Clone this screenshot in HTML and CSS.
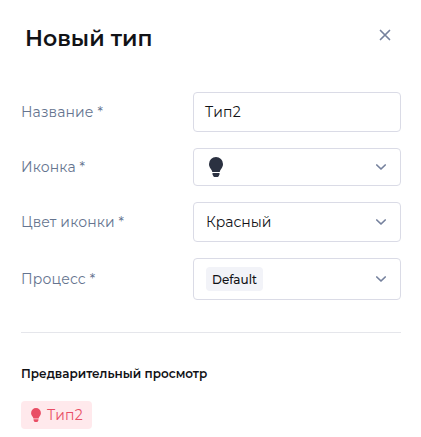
FILE: index.html
```html
<!DOCTYPE html>
<html lang="ru">
<head>
<meta charset="utf-8">
<title>Новый тип</title>
<link rel="stylesheet" href="styles.css">
</head>
<body>
<svg class="sprite" aria-hidden="true">
  <symbol id="bulb" viewBox="0 0 14 20"><path d="M7 0a7 7 0 0 1 7 7c0 2-.7 3.400-1.700 4.700-.8 1.100-1.300 2-1.600 3.300H3.300C3 13.700 2.500 12.800 1.700 11.700.7 10.400 0 9 0 7a7 7 0 0 1 7-7z"/><path d="M3.500 16h7v1.500l-.9 1.800a1.200 1.200 0 0 1-1 .7H5.400a1.200 1.200 0 0 1-1-.7l-.9-1.800z"/></symbol>
  <symbol id="chevron" viewBox="0 0 12 8"><path d="M1.800 2 6 6l4.200-4"/></symbol>
</svg>
<main class="dialog">
  <header class="header">
    <h1 class="title">Новый тип</h1>
    <button class="close" aria-label="Закрыть"><svg viewBox="0 0 12 12"><path d="M1.500 1.500l9 9M10.500 1.500l-9 9"/></svg></button>
  </header>
  <form class="form">
    <div class="row"><label class="label">Название *</label><div class="field input"><span class="value">Тип2</span></div></div>
    <div class="row"><label class="label">Иконка *</label><div class="field short"><svg class="bulb"><use href="#bulb"/></svg><svg class="chevron"><use href="#chevron"/></svg></div></div>
    <div class="row"><label class="label">Цвет иконки *</label><div class="field"><span class="value">Красный</span><svg class="chevron"><use href="#chevron"/></svg></div></div>
    <div class="row"><label class="label">Процесс *</label><div class="field tall"><span class="tag">Default</span><svg class="chevron"><use href="#chevron"/></svg></div></div>
  </form>
  <section class="preview">
    <h2 class="subtitle">Предварительный просмотр</h2>
    <div class="chip"><svg class="chip-icon"><use href="#bulb"/></svg><span>Тип2</span></div>
  </section>
</main>
</body>
</html>
```
FILE: styles.css
```css
* { box-sizing: border-box; }
body { margin: 0; background: #fff; color: #111216; font-family: Montserrat, Inter, sans-serif; }
.sprite { position: absolute; width: 0; height: 0; }
.dialog { width: 401px; padding-left: 21px; }
.header { display: flex; justify-content: space-between; height: 92px; padding: 25px 10px 0 4px; }
.title { margin: 0; font-size: 22px; line-height: 28px; font-weight: 600; white-space: nowrap; }
.close { width: 12px; height: 12px; margin-top: 4px; padding: 0; border: 0; background: none; }
.close svg { display: block; width: 12px; height: 12px; fill: none; stroke: #75819d; stroke-width: 1.700; stroke-linecap: round; }
.form { display: flex; flex-direction: column; gap: 16px; padding-bottom: 32px; border-bottom: 1px solid #e5e6eb; }
.row { display: grid; grid-template-columns: 172px 208px; align-items: center; }
.label { color: #65748f; font-size: 14px; line-height: 20px; letter-spacing: 0.13px; white-space: nowrap; }
.field { display: flex; align-items: center; justify-content: space-between; height: 40px; padding: 0 13px 0 12px; border: 1px solid #dadbe6; border-radius: 4px; }
.input { padding-left: 11px; }
.short { height: 38px; }
.tall { height: 42px; }
.value { font-size: 14px; line-height: 20px; }
.input .value { letter-spacing: 0.2px; }
.bulb { width: 14px; height: 20px; margin-left: 2.500px; fill: #2b3141; }
.chevron { width: 12px; height: 8px; fill: none; stroke: #75819d; stroke-width: 1.700; stroke-linecap: round; stroke-linejoin: round; }
.tag { height: 24px; width: 57px; padding-left: 6px; border-radius: 4px; background: #f2f3f8; font-size: 12px; line-height: 25px; font-weight: 500; }
.subtitle { margin: 33px 0 19px; font-size: 12px; line-height: 16px; font-weight: 600; white-space: nowrap; }
.chip { display: flex; align-items: center; width: 71px; height: 28px; padding-left: 10px; border-radius: 4px; background: #ffe9ec; color: #e94e65; font-size: 14px; font-weight: 400; letter-spacing: 0.2px; line-height: 28px; }
.chip-icon { width: 10px; height: 14px; margin-right: 6px; fill: #e94e65; }
```
